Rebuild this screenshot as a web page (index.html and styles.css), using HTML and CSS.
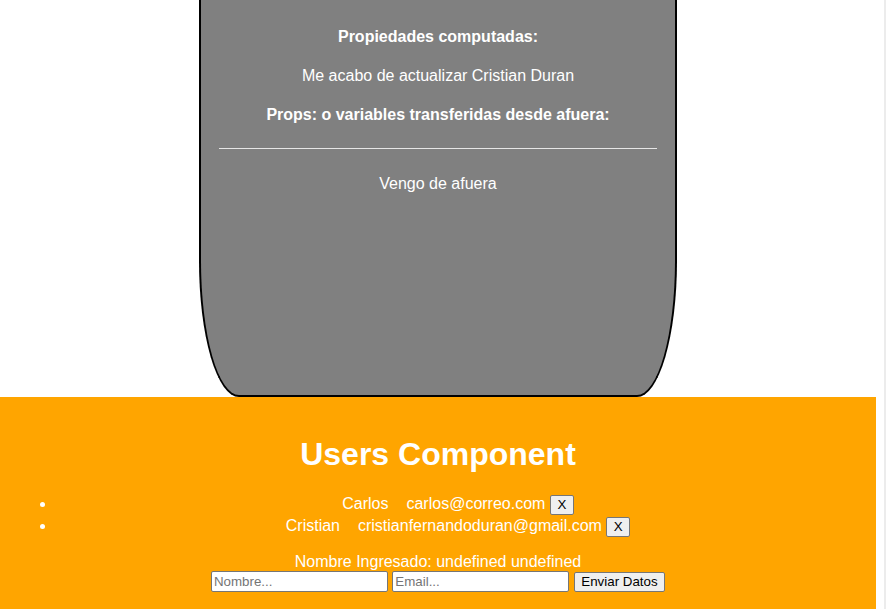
FILE: index.html
```html
<!DOCTYPE html>
<html lang="es">
<head>
<meta charset="utf-8">
<title>Users</title>
<link rel="stylesheet" href="styles.css">
</head>
<body>
  <div class="page">
    <div class="card">
      <h4 class="heading">Propiedades computadas:</h4>
      <p class="line">Me acabo de actualizar Cristian Duran</p>
      <h4 class="heading props">Props: o variables transferidas desde afuera:</h4>
      <hr class="rule">
      <p class="outside">Vengo de afuera</p>
    </div>
    <section class="users">
      <h1 class="title">Users Component</h1>
      <ul class="list">
        <li><span class="name">Carlos</span><span class="email">carlos@correo.com</span> <button class="btn" type="button">X</button></li>
        <li><span class="name">Cristian</span><span class="email">cristianfernandoduran@gmail.com</span> <button class="btn" type="button">X</button></li>
      </ul>
      <div class="entered">Nombre Ingresado: undefined undefined</div>
      <form class="form">
        <input class="field" type="text" placeholder="Nombre..."> <input class="field" type="text" placeholder="Email..."> <button class="btn" type="button">Enviar Datos</button>
      </form>
    </section>
  </div>
  <div class="rail"></div>
</body>
</html>
```
FILE: styles.css
```css
html, body {
  margin: 0;
  padding: 0;
  height: 100%;
  overflow: hidden;
}
body {
  display: flex;
  background: #ffffff;
  font-family: "Liberation Sans", Arial, sans-serif;
  font-size: 16px;
}
.page {
  width: 876px;
  flex: 0 0 876px;
  display: flex;
  flex-direction: column;
}
.rail {
  margin-left: 8px;
  width: 2px;
  background: #ececec;
}
.card {
  box-sizing: border-box;
  width: 478px;
  height: 397px;
  margin: 0 auto;
  padding: 28px 18px 0;
  background: #808080;
  color: #ffffff;
  text-align: center;
  border: 2px solid #000000;
  border-top: none;
  border-radius: 0 0 40px 40px / 0 0 136px 136px;
}
.heading {
  margin: 0 0 21px;
  font-size: 16px;
  font-weight: bold;
}
.line {
  margin: 0 0 21px;
}
.heading.props {
  margin-bottom: 23.5px;
}
.rule {
  margin: 0;
  height: 0;
  border: 0;
  border-top: 1px solid #e6e6e6;
}
.outside {
  margin: 26px 0 0;
}
.users {
  flex: 1;
  background: #ffa500;
  color: #ffffff;
  text-align: center;
  padding: 16px;
}
.title {
  font-size: 32px;
  font-weight: bold;
  margin: 23.44px 0 19.44px;
}
.list {
  margin: 16px 0;
  padding-left: 40px;
}
.list li {
  line-height: 21px;
}
.name {
  margin-right: 18px;
}
.btn {
  font-family: "Liberation Sans", Arial, sans-serif;
  font-size: 13.33px;
  color: #000000;
  background: #efefef;
  border: 1px solid #767676;
  border-radius: 2px;
  padding: 1px 6.5px;
  line-height: 16px;
}
.entered {
  line-height: 18.4px;
}
.form {
  margin: 0;
}
.field {
  box-sizing: border-box;
  width: 177px;
  height: 21px;
  padding: 1px 2px;
  font-family: "Liberation Sans", Arial, sans-serif;
  font-size: 13.33px;
  color: #000000;
  background: #ffffff;
  border: 1px solid #767676;
  border-radius: 2px;
}
.field::placeholder {
  color: #757575;
}
```
